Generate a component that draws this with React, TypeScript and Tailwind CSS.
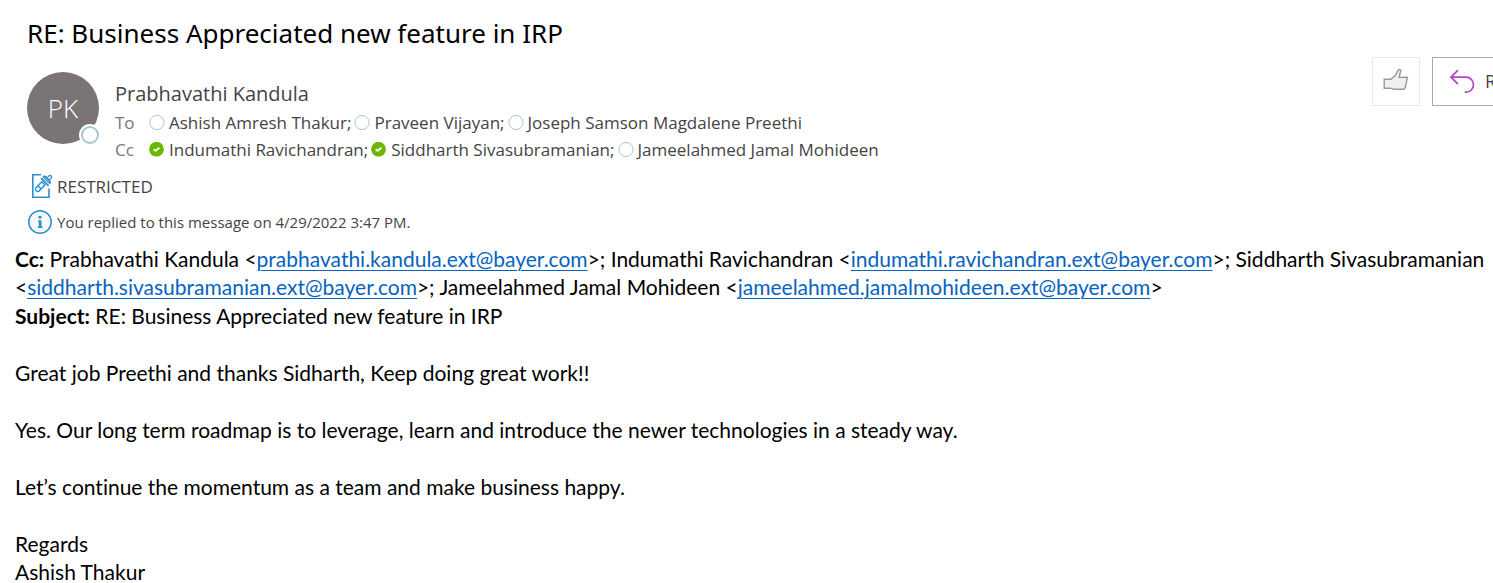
import type { ReactNode } from "react";

type Person = { name: string; available: boolean };

const to: Person[] = [
  { name: "Ashish Amresh Thakur", available: false },
  { name: "Praveen Vijayan", available: false },
  { name: "Joseph Samson Magdalene Preethi", available: false },
];

const cc: Person[] = [
  { name: "Indumathi Ravichandran", available: true },
  { name: "Siddharth Sivasubramanian", available: true },
  { name: "Jameelahmed Jamal Mohideen", available: false },
];

function Presence({ available }: { available: boolean }) {
  return (
    <svg viewBox="0 0 16 16" className="mr-1 size-4 shrink-0" aria-hidden="true">
      {available ? (
        <>
          <circle cx="7.5" cy="7.2" r="7.4" fill="#6bb700" />
          <path d="M4.7 7.2 6.6 8.8 10.4 5.8" fill="none" stroke="#fff" strokeWidth="1.8" />
        </>
      ) : (
        <circle cx="8" cy="7.5" r="7.1" fill="#fff" stroke="#a9c5d3" strokeWidth="1" />
      )}
    </svg>
  );
}

function Recipients({ label, people }: { label: string; people: Person[] }) {
  return (
    <div className="flex h-[27px] items-center text-[17px] whitespace-nowrap text-[#444]">
      <span className="w-[34px] text-[#777]">{label}</span>
      {people.map((person, i) => (
        <span key={person.name} className="mr-[3px] flex items-center">
          <Presence available={person.available} />
          <span>
            {person.name}
            {i < people.length - 1 && ";"}
          </span>
        </span>
      ))}
    </div>
  );
}

function Mail({ children }: { children: string }) {
  return (
    <a href={`mailto:${children}`} className="text-[#0563c1] underline decoration-1 underline-offset-3">
      {children}
    </a>
  );
}

function Line({ children }: { children?: ReactNode }) {
  return <p className="min-h-[57px]">{children}</p>;
}

export default function App() {
  return (
    <main className="overflow-hidden bg-white font-['Open_Sans','Noto_Sans',sans-serif]">
      <h1 className="pt-[15px] pl-[27px] font-['Noto_Sans',sans-serif] text-[26px] leading-[37px] text-black">
        RE: Business Appreciated new feature in IRP
      </h1>

      <header className="flex items-start pt-[5px]">
        <div className="relative mt-[15px] ml-[27px] flex size-[72px] shrink-0 items-center justify-center rounded-full bg-[#7a7574] text-[26px] font-light text-white">
          PK
          <span className="absolute -right-0.5 -bottom-0.5 size-[22px] rounded-full bg-white p-[2px]">
            <span className="block size-[18px] rounded-full border-2 border-[#a9c5d3]" />
          </span>
        </div>
        <div className="ml-4 grow pt-[22px]">
          <h2 className="h-[30px] text-[20px] leading-[30px] text-[#444]">Prabhavathi Kandula</h2>
          <Recipients label="To" people={to} />
          <Recipients label="Cc" people={cc} />
        </div>
        <div className="flex w-[121px] shrink-0 gap-3 overflow-hidden">
          <button
            type="button"
            aria-label="Like"
            className="flex h-[49px] w-12 shrink-0 items-center justify-center border border-[#e6e6e6]"
          >
            <svg viewBox="0 0 26 24" className="mb-1 h-6 w-[26px]" aria-hidden="true">
              <path
                d="M1.2 11.2H8L12.4 7.3 14.8 2.6Q16.4 .6 17.8 2.2L16.2 9.4 24.4 9.2 22.2 19.9 20.4 21.3H10.8L8 20.2H1.2Z"
                fill="#f0f0f0"
                stroke="#999"
                strokeWidth="1.4"
              />
            </svg>
          </button>
          <button
            type="button"
            className="flex h-[49px] w-[130px] shrink-0 items-center border border-[#ababab] pl-[17px] text-[18px] text-[#444]"
          >
            <svg viewBox="0 0 26 26" className="mr-[9px] size-[26px]" fill="none" stroke="#b146c2" strokeWidth="1.7" aria-hidden="true">
              <path d="M8 1.2 1 8.2 8 15.2M1 8.2H16A7.5 7.5 0 0 1 16 23.2H14.8" />
            </svg>
            R
          </button>
        </div>
      </header>

      <div className="flex h-10 items-center gap-1 pt-2 pl-[31px] text-[17px] text-[#444]">
        <svg viewBox="0 0 22 26" className="mb-0.5 h-[26px] w-[22px]" fill="none" stroke="#2b8fcf" aria-hidden="true">
          <path d="M10 1.8H1.8V24.2H18V15.5" strokeWidth="1.6" />
          <path d="M4.6 15.2 10.8 8.8 13.9 11.9 7.7 18.3Q6.3 18.8 5.2 17.7 4.2 16.6 4.6 15.2ZM7 12.7 10.2 15.9" strokeWidth="1.4" />
          <path d="M10 5.2 17.6 12.8M12.2 4.1Q13.4 2.7 14.8 4L18.6 7.8Q19.8 9 18.7 10.4" strokeWidth="1.8" />
          <path d="M12 4 18.8 10.6M16.5 4.5Q18.5 1.3 20.2 3 21.7 4.8 18.5 6.5" strokeWidth="1.3" />
        </svg>
        RESTRICTED
      </div>
      <div className="flex h-8 items-center gap-[5px] pt-1.5 pl-7 text-[15px] text-[#444]">
        <svg viewBox="0 0 24 24" className="size-6" aria-hidden="true">
          <circle cx="12" cy="12" r="11.2" fill="#f8f8f8" stroke="#2b8fcf" strokeWidth="1.5" />
          <path d="M10.5 6H13.5V8.6H10.5ZM10 10.2H13.5V16.5H14.5V18H9.7V16.5H10.8V11.6H10Z" fill="#2b8fcf" />
        </svg>
        You replied to this message on 4/29/2022 3:47 PM.
      </div>

      <article className="pt-2.5 pr-1 pl-[15px] font-['Lato',sans-serif] text-[21px] leading-[28px] text-black [font-variant-ligatures:none]">
        <Line>
          <b>Cc:</b> Prabhavathi Kandula &lt;<Mail>prabhavathi.kandula.ext@bayer.com</Mail>&gt;; Indumathi Ravichandran
          &lt;<Mail>indumathi.ravichandran.ext@bayer.com</Mail>&gt;; Siddharth Sivasubramanian
          <br />
          &lt;<Mail>siddharth.sivasubramanian.ext@bayer.com</Mail>&gt;; Jameelahmed Jamal Mohideen
          &lt;<Mail>jameelahmed.jamalmohideen.ext@bayer.com</Mail>&gt;
        </Line>
        <Line>
          <b>Subject:</b> RE: Business Appreciated new feature in IRP
        </Line>
        <Line>Great job Preethi and thanks Sidharth, Keep doing great work!!</Line>
        <Line>Yes. Our long term roadmap is to leverage, learn and introduce the newer technologies in a steady way.</Line>
        <Line>Let’s continue the momentum as a team and make business happy.</Line>
        <p>
          Regards
          <br />
          Ashish Thakur
        </p>
      </article>
    </main>
  );
}
